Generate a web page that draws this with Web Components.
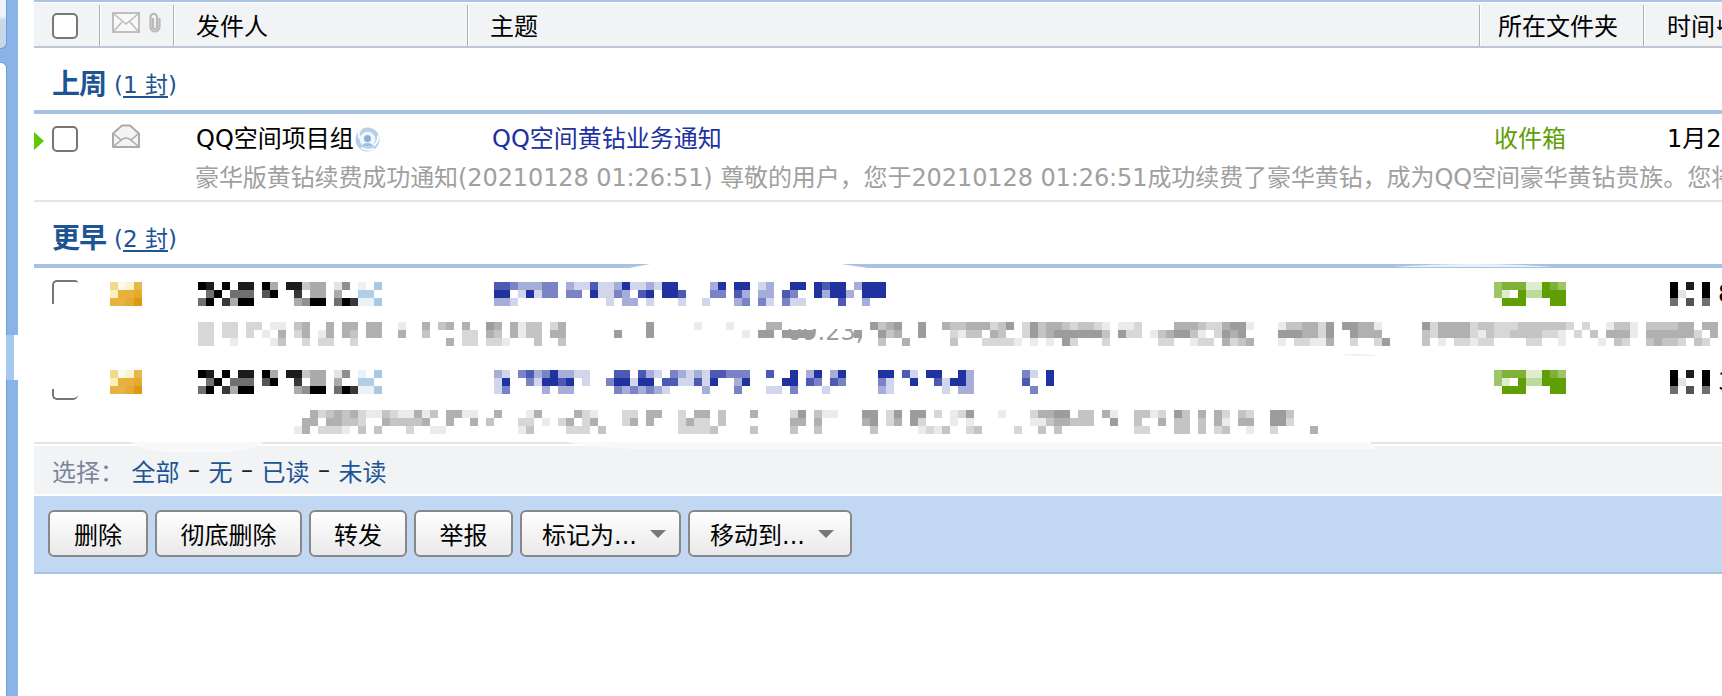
<!DOCTYPE html>
<html lang="zh"><head><meta charset="utf-8"><title>邮件列表</title>
<style>
html,body{margin:0;padding:0;background:#fff;overflow:hidden}
body{font:24px "DejaVu Sans","Noto Sans CJK SC",sans-serif;color:#000}
</style></head><body>
<mail-page>
  <side-rail></side-rail>
  <mail-main>
    <list-header></list-header>
    <group-title name="上周" count="1"></group-title>
    <mail-row kind="arrow">
      <span slot="sender">QQ空间项目组<qq-badge></qq-badge></span>
      <span slot="subject">QQ空间黄钻业务通知</span>
      <span slot="preview">豪华版黄钻续费成功通知(20210128 01:26:51) 尊敬的用户，您于20210128 01:26:51成功续费了豪华黄钻，成为QQ空间豪华黄钻贵族。您将</span>
      <span slot="folder">收件箱</span>
      <span slot="time">1月2</span>
    </mail-row>
    <group-title name="更早" count="2"></group-title>
    <mail-row kind="masked-a">
      <pixel-strip slot="sender" max="9" color="#000" data="980908809308823301 40a0c/059055506900703303 00bb0/5907399000003499059 7aac"></pixel-strip>
      <pixel-strip slot="subject" max="5" color="#2031a0" data="4432223302 1141125112 1550000250 5501200550 545502555/5501513303 3051132045 0554000330 4202204300 525520555/2210000000 0000102201 0001001000 2303103110 000400200"></pixel-strip>
      <pixel-strip slot="preview" max="5" color="#9c9c9c" data="2202202201 1034004044 0440010040 3404005404 1330240000 0000005000 0010001000 0440000000 0000534500 5004334442 3502534432 3321011200 0044432245 5100013344 2505544100 0005244442 3322233333 3202001331 0333344044/2202202010 4024014043 0440040030 0002204304 1330440000 0050005000 0000000010 5505555000 0050053400 5000213304 3002534555 5553052201 3455310254 5000055544 2500544400 0003244442 1322333322 1020304441 0444444204/2200100001 3002022002 0000000000 0402202210 0030030000 0000000000 0000000000 0000000000 0000030040 0000300022 2210101052 0002000000 2200122042 3400010221 1400200250 0003010221 2200002200 1000010320 0343320320"><span class="leak" style="position:absolute;left:589px;top:-2px;color:#9c9c9c;font-size:24px;line-height:24px;white-space:nowrap;clip-path:inset(9px 0 0 0)">09.23,</span></pixel-strip>
      <pixel-strip slot="folder" max="5" color="#5f9e05" data="344411543/310522555/055500055"></pixel-strip>
      <span slot="time" style="display:flex;align-items:center"><pixel-strip max="9" color="#000" data="908090/910090/506050"></pixel-strip><span>8</span></span>
    </mail-row>
    <mail-row kind="masked-b">
      <pixel-strip slot="sender" max="9" color="#000" data="980908809308823301 40a0c/059055506900703303 00bb0/5907399000003499059 7aac"></pixel-strip>
      <pixel-strip slot="subject" max="5" color="#2031a0" data="2103423522 1100044042 1032121443 3300400502 5025000055 0410550052 0000003105/1500315545 0100355155 0441141500 2500005504 3043000031 0050041552 0000004005/1300002022 0000032323 2100002000 3000110300 0100000021 0000001022 0000000300"></pixel-strip>
      <pixel-strip slot="preview" max="5" color="#9c9c9c" style="margin-left:96px" data="0042343421 1321141304 4110040001 4000042100 0220440020 4403000400 0025031100 0550250550 2012500010 0024455033 0410033120 5304042032 00553000/0440443320 0433334004 0040300022 0102402400 0240400024 2203000000 0044040000 0450240520 0010100000 0011344333 0050030040 3303041044 00552000/1402221030 3000200110 0000000013 0000222030 0000000022 2230000300 0030030000 0030000012 1300230000 2003030000 0000022000 3303023001 00200004"></pixel-strip>
      <pixel-strip slot="folder" max="5" color="#5f9e05" data="344411543/310522555/055500055"></pixel-strip>
      <span slot="time" style="display:flex;align-items:center"><pixel-strip max="9" color="#000" data="908090/910090/506050"></pixel-strip><span>3</span></span>
    </mail-row>
    <select-bar></select-bar>
    <action-bar>
      <action-button style="--w:100px">删除</action-button>
      <action-button style="--w:147px">彻底删除</action-button>
      <action-button style="--w:98px">转发</action-button>
      <action-button style="--w:99px">举报</action-button>
      <action-button style="--w:161px" menu>标记为...</action-button>
      <action-button style="--w:164px" menu>移动到...</action-button>
    </action-bar>
  </mail-main>
  <wipe-layer></wipe-layer>
</mail-page>
<script>
const def=(name,css,html,init)=>customElements.define(name,class extends HTMLElement{
  constructor(){super();this.attachShadow({mode:'open'});}
  connectedCallback(){
    const h=typeof html==='function'?html(this):html;
    this.shadowRoot.innerHTML='<style>'+css+'</style>'+h;
    if(init)init(this);
  }
});

def('mail-page',':host{display:flex;position:relative;width:1722px;height:696px;overflow:hidden}','<slot></slot>');
def('mail-main',':host{display:flex;flex-direction:column;flex:1;min-width:0;overflow:hidden}','<slot></slot>');

def('side-rail',`:host{display:block;position:relative;width:34px;flex:none;height:696px}
 .strip{width:18px;height:100%;background:#8ab4e8;display:flex;flex-direction:column;box-shadow:inset 1px 0 0 #8ab4e8}
 .t1{width:6px;height:48px;background:linear-gradient(#eef4fa 0,#eef4fa 16px,#c8d8e8 20px,#c8d8e8 100%);border:solid #6e9dd8;border-width:0 1px 1px 0;border-radius:0 0 6px 0}
 .t2{width:6px;flex:1;margin-top:13px;background:#fff;border:solid #6e9dd8;border-width:1px 1px 0 0;border-radius:0 6px 0 0}`,
 '<div class="strip"><div class="t1"></div><div class="t2"></div></div>');

def('check-box',`:host{display:block;width:26px;height:26px;box-sizing:border-box;border:2px solid #777;border-radius:5px;background:#fff}
 :host([part-view=top]){height:24px;border-width:2px 0 0 2px;border-radius:5px 3px 0 0;background:none}
 :host([part-view=bottom]){height:11px;border-width:0 0 2px 2px;border-radius:0 0 5px 5px;background:none}`,'');

def('list-header',`:host{display:block;height:48px;box-sizing:border-box;border-top:2px solid #a8c4e0;border-bottom:2px solid #bcc6d4;padding-top:1px;background:linear-gradient(#fff 0,#fff 1px,#f2f3f5 1px)}
 .g{display:grid;grid-template-columns:65px 74px 294px 1012px 164px 79px;height:100%;align-items:stretch}
 .c{display:flex;align-items:center;padding:0 0 2px 22px;box-sizing:border-box;white-space:nowrap;overflow:hidden;margin-top:2px;border-left:1px solid #aeb1b5;box-shadow:inset 1px 0 0 #fff}
 .c.a{border:0;box-shadow:none;padding:0 0 0 18px}
 .c.i{padding:7px 0 0 12px;gap:8px;align-items:flex-start}
 .c.f{padding-left:18px}.c.t{padding-left:23px}
 .ar{margin-left:-1px;font-weight:bold;font-size:14px}
 svg{display:block}`,
 `<div class="g"><div class="c a"><check-box></check-box></div>
 <div class="c i"><svg width="28" height="21" viewBox="0 0 28 21"><rect x="1" y="1" width="26" height="19" fill="#f8f8f8" stroke="#bdbdbd" stroke-width="2"/><path d="M2 2l12 10L26 2M2 19l8-9M26 19l-8-9" fill="none" stroke="#bdbdbd" stroke-width="1.6"/></svg>
 <svg width="14" height="21" viewBox="0 0 14 21"><path d="M5 6v9a2 2 0 0 0 4 0V5a3.200 3.200 0 0 0-6.500 0v10a4.500 4.500 0 0 0 9 0V6" fill="none" stroke="#b9b9b9" stroke-width="2.200"/></svg></div>
 <div class="c">发件人</div><div class="c">主题</div><div class="c f">所在文件夹</div><div class="c t">时间<span class="ar">↓</span></div></div>`);

def('group-title',`:host{display:block;height:66px;box-sizing:border-box;border-bottom:4px solid #a6c4e2;padding:21px 0 0 18px;color:#1d5494;white-space:nowrap;line-height:32px}
 b{font-size:28px;letter-spacing:-1px;margin-right:8px}span{font-size:23px;position:relative;top:-1px}u{text-underline-offset:3px}`,
 t=>`<b>${t.getAttribute('name')}</b><span>(<u>${t.getAttribute('count')} 封</u>)</span>`);

def('pixel-strip',':host{display:block;position:relative;height:24px;overflow:visible}svg{display:block}',
 t=>{
  const rows=(t.getAttribute('data')||'').replace(/ /g,'').split('/');
  const max=+t.getAttribute('max')||5,color=t.getAttribute('color')||'#000';
  const pal={a:'#eaf1f7',b:'#b2cee6',c:'#a9c8e2'};
  const w=Math.max(...rows.map(r=>r.length));let s='';
  rows.forEach((r,y)=>[...r].forEach((c,x)=>{
    if(c==='0')return;
    if(pal[c])s+=`<rect x="${x*8}" y="${y*8}" width="8" height="8" fill="${pal[c]}"/>`;
    else s+=`<rect x="${x*8}" y="${y*8}" width="8" height="8" fill="${color}" fill-opacity="${(+c/max).toFixed(2)}"/>`;
  }));
  return `<svg width="${w*8}" height="24" shape-rendering="crispEdges">${s}</svg><slot></slot>`;
 });

def('gold-mail',':host{display:block;width:32px;height:24px}svg{display:block}',
 ()=>{const cols=['#f2d98c','#fdf9ea','#faf2cd','#e6b84c','#fcefbb','#e7b13e','#e7b13e','#e5a92c','#e6b241','#e6b241','#e6aa34','#dd9a10'];
  return '<svg width="32" height="24" shape-rendering="crispEdges">'+cols.map((c,i)=>`<rect x="${i%4*8}" y="${(i>>2)*8}" width="8" height="8" fill="${c}"/>`).join('')+'</svg>';});

def('open-mail',':host{display:block;width:28px;height:24px}svg{display:block}',
 '<svg width="28" height="24" viewBox="0 0 28 24"><path d="M1 9.500 10 1.500h8l9 8V23H1z" fill="#f4f4f4" stroke="#aaa" stroke-width="2" stroke-linejoin="round"/><path d="M2 10l7 6q5-4 10 0l7-6M2 22l8-6.500M26 22l-8-6.500" fill="none" stroke="#aaa" stroke-width="1.600"/></svg>');

def('qq-badge',':host{display:inline-block;width:25px;height:25px;vertical-align:-5px;margin-left:1px}svg{display:block}',
 '<svg width="25" height="25" viewBox="0 0 24 24"><circle cx="12" cy="12" r="11.500" fill="#b4d0e8"/><circle cx="12" cy="12" r="7.500" fill="#f2f7fb"/><path d="M6 1.500Q2 6 4.500 11M22 8q1 6-4 10M18 21q-6 2-12-1" fill="none" stroke="#fff" stroke-width="1.800"/><circle cx="12" cy="11" r="3.400" fill="#86b0d4"/><path d="M6.500 17.500q5.500-5 11 0q-5.500 3-11 0z" fill="#9cc0de"/></svg>');

def('mail-row',`:host{display:block;height:88px;box-sizing:border-box;padding-top:6px;position:relative}
 .g{display:grid;grid-template-columns:65px 74px 294px 1012px 164px 79px;grid-template-rows:32px 46px}
 .g.m{grid-template-rows:40px 40px}
 .c{display:flex;align-items:center;white-space:nowrap;overflow:hidden;min-width:0}
 .cb{padding-left:18px;align-items:flex-start;padding-top:6px;position:relative;box-sizing:border-box}
 .ic{padding-left:13px}
 .m .ic{padding-left:11px}
 .s{padding-left:23px}.sub{padding-left:25px;color:#2031a0}
 .f{padding-left:15px;color:#5f9e05}.t{padding-left:24px}
 .p{grid-column:3/7;padding-left:22px;color:#a0a0a0;position:relative;overflow:hidden;letter-spacing:-.09px}
 .m .s{padding-left:25px}.m .sub{padding-left:27px}.m .t{padding-left:27px}
 .m .p{padding-left:25px;overflow:visible;letter-spacing:0}
 .tri{position:absolute;left:0;top:12px;width:0;height:0;border-left:10px solid #5fc900;border-top:9px solid transparent;border-bottom:9px solid transparent}
 .rule{position:absolute;left:0;right:0;bottom:0;height:2px;background:#e2e6ec}`,
 t=>{const k=t.getAttribute('kind');const m=k!=='arrow';
  const box=k==='arrow'?'<check-box></check-box>':k==='masked-a'?'<check-box part-view="top"></check-box>':'<check-box part-view="bottom" style="margin-top:21px"></check-box>';
  const icon=m?'<gold-mail></gold-mail>':'<open-mail></open-mail>';
  return `<div class="g ${m?'m':''}">
   <div class="c cb">${m?'':'<i class="tri"></i>'}${box}</div>
   <div class="c ic">${icon}</div>
   <div class="c s"><slot name="sender"></slot></div>
   <div class="c sub"><slot name="subject"></slot></div>
   <div class="c f"><slot name="folder"></slot></div>
   <div class="c t"><slot name="time"></slot></div>
   <div class="c" style="grid-column:1/3"></div>
   <div class="c p"><slot name="preview"></slot></div></div>${(k==='arrow'||k==='masked-b')?'<div class="rule"></div>':''}`;});

def('select-bar',`:host{display:flex;align-items:center;height:48px;margin-top:2px;background:#f2f3f5;padding-left:18px;gap:8.5px;white-space:nowrap;font-size:24px;color:#1d5494}
 .l{color:#7a8699;width:71px}.d{color:#222;width:12px;text-align:center}`,
 '<span class="l">选择：</span><span>全部</span><span class="d">–</span><span>无</span><span class="d">–</span><span>已读</span><span class="d">–</span><span>未读</span>');

def('action-bar',`:host{display:flex;align-items:center;gap:7px;height:78px;box-sizing:border-box;margin-top:2px;background:#c2d8f2;border-bottom:2px solid #a9c2de;padding:0 0 2px 14px}`,'<slot></slot>');

def('action-button',`:host{display:flex;align-items:center;justify-content:center;width:var(--w);height:47px;box-sizing:border-box;border:2px solid #888;border-radius:6px;background:linear-gradient(#fff,#e9e9e9);white-space:nowrap;color:#000}
 :host([menu]){justify-content:flex-start;padding-left:20px}
 .tri{margin-left:13px;width:0;height:0;border-top:8px solid #777;border-left:8px solid transparent;border-right:8px solid transparent;margin-top:1px}`,
 t=>'<slot></slot>'+(t.hasAttribute('menu')?'<i class="tri"></i>':''));

def('wipe-layer',':host{position:absolute;left:0;top:0;width:1722px;height:696px;pointer-events:none}svg{display:block}',
 `<svg width="1722" height="696" viewBox="0 0 1722 696">
  <path d="M629 268 650 264H841L868 268z" fill="#fff"/>
  <path d="M1393 268Q1470 262 1553 268z" fill="#fff" fill-opacity=".75" transform="translate(0 -1)"/>
  <path d="M130 442H264Q250 452 220 452H170Q145 452 130 442z" fill="#f8f9fb"/>
  <path d="M566 442H1370L1376 449H640Q600 449 566 442z" fill="#f8f9fb"/>
  <rect x="6" y="335" width="8" height="45" fill="#a6c8f0"/>
  <rect x="14" y="335" width="4" height="45" fill="#fff"/>
  <path d="M1338 355Q1360 353 1380 356z" fill="#dfe7f0"/>
 </svg>`);
</script>
</body></html>
